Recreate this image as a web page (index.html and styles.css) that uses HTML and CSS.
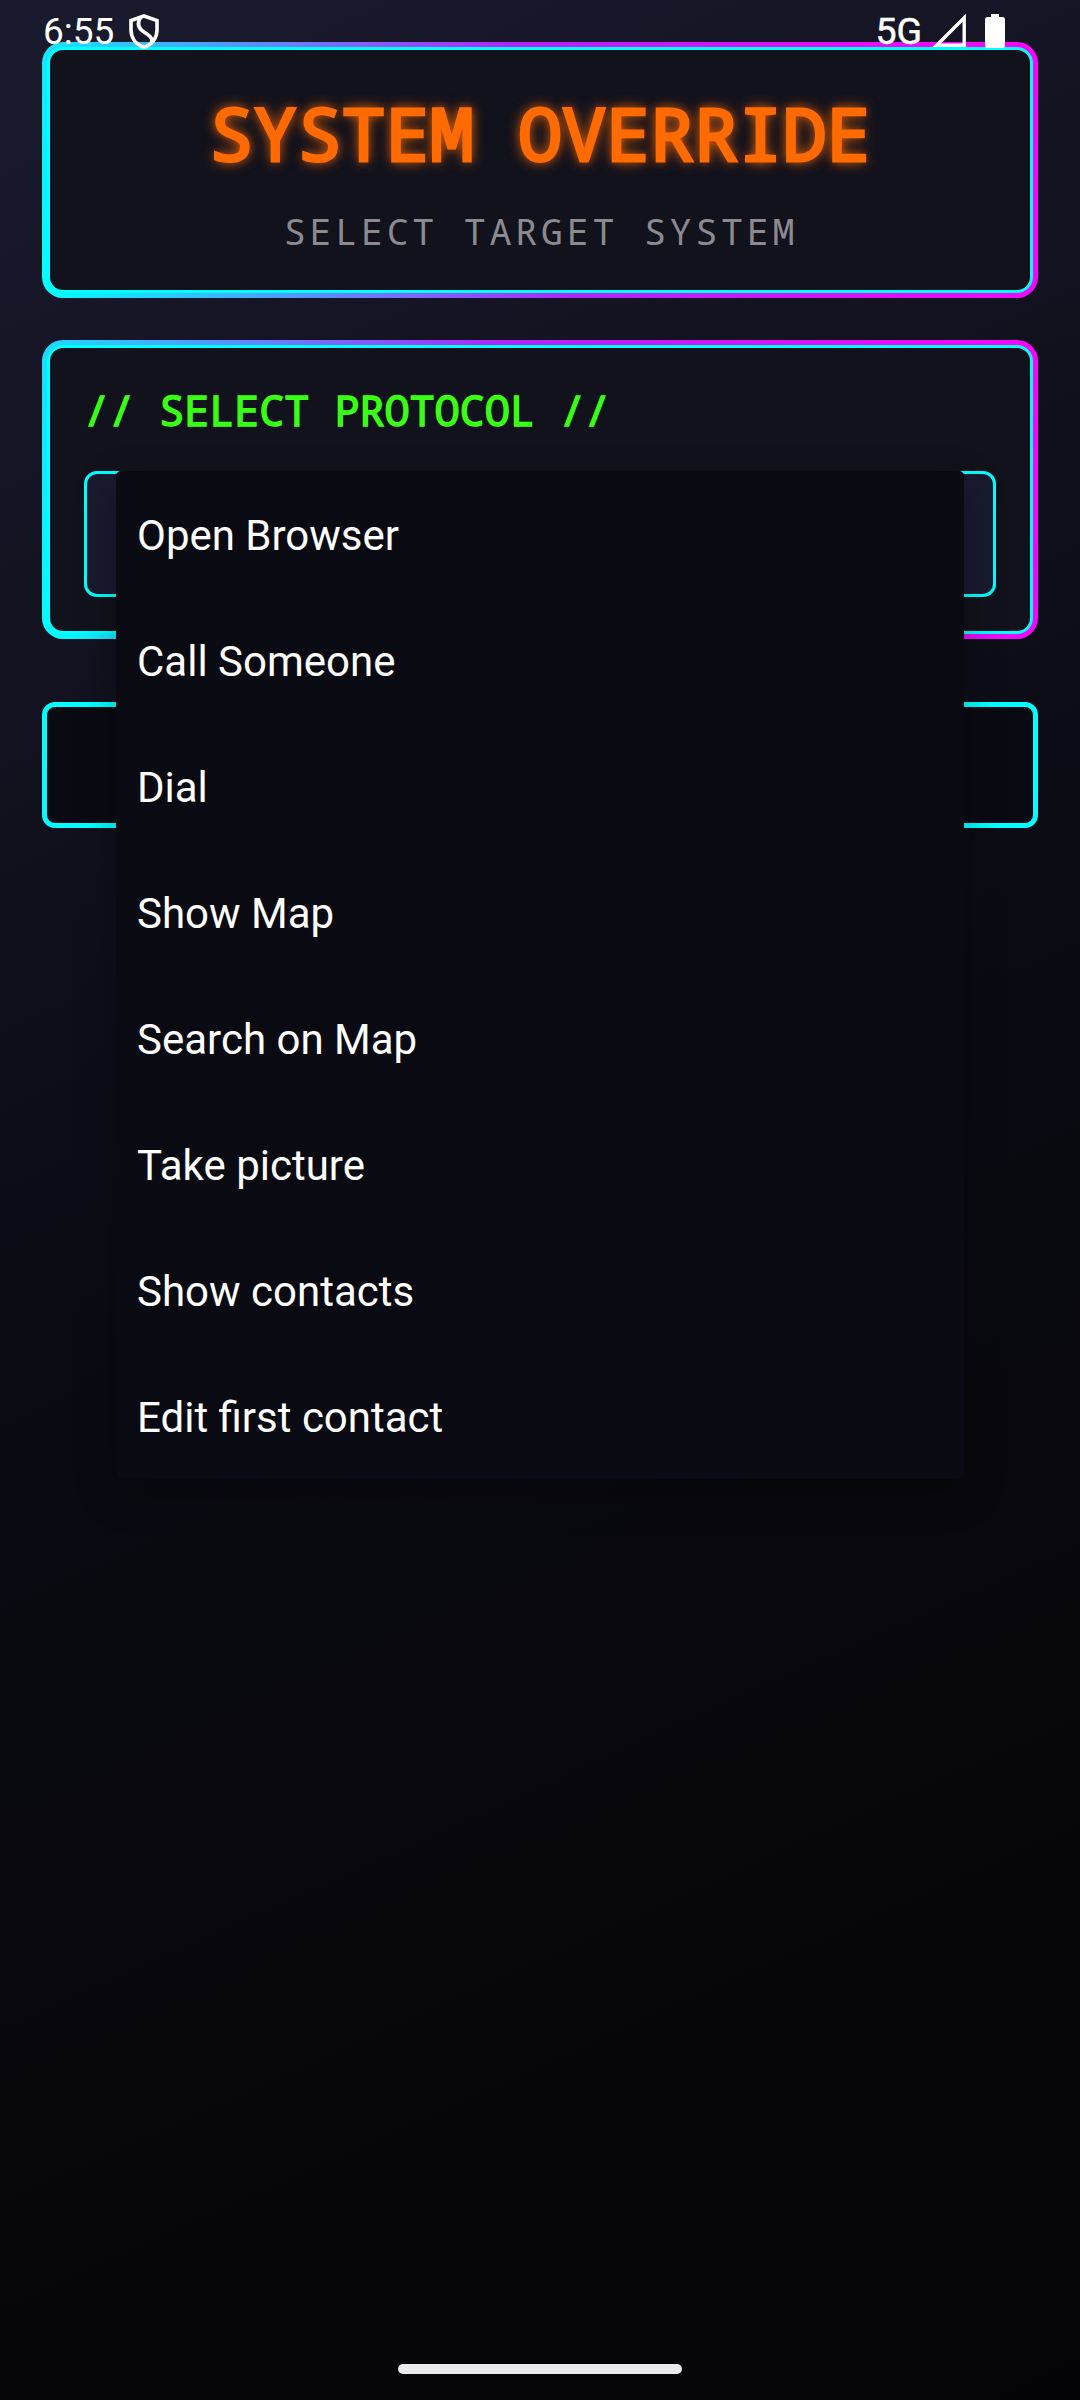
FILE: index.html
```html
<!DOCTYPE html>
<html lang="en">
<head>
<meta charset="utf-8">
<title>System Override</title>
<link rel="stylesheet" href="styles.css">
</head>
<body>
<div class="screen">
  <div class="status">
    <div class="status-left">
      <span class="clock">6:55</span>
      <svg class="shield" viewBox="0 0 30 36" fill="none" stroke="#fff" stroke-width="3.600"><path d="M15 2 28 6.500V16C28 24 23 30.500 15 33.500 7 30.500 2 24 2 16V6.500Z"/><path d="M11.500 3.500C7.500 10 9.500 14.500 15 18S24 24 22.500 28.500"/></svg>
    </div>
    <div class="status-right">
      <span class="network">5G</span>
      <svg class="signal" viewBox="0 0 33 33"><path d="M31.200 3.800V31.200H3.800Z" fill="none" stroke="#fff" stroke-width="3.400"/></svg>
      <svg class="battery" viewBox="0 0 20 34"><path d="M6 0H14V3H18Q20 3 20 5.500V31Q20 34 17.500 34H2.500Q0 34 0 31V5.500Q0 3 2 3H6Z" fill="#fff"/></svg>
    </div>
  </div>
  <header class="card card-title">
    <div class="panel">
      <h1 class="title">SYSTEM OVERRIDE</h1>
      <p class="subtitle">SELECT TARGET SYSTEM</p>
    </div>
  </header>
  <section class="card card-protocol">
    <div class="panel">
      <h2 class="label">// SELECT PROTOCOL //</h2>
      <div class="spinner">
        <ul class="menu">
          <li>Open Browser</li>
          <li>Call Someone</li>
          <li>Dial</li>
          <li>Show Map</li>
          <li>Search on Map</li>
          <li>Take picture</li>
          <li>Show contacts</li>
          <li>Edit first contact</li>
        </ul>
      </div>
    </div>
  </section>
  <div class="execute"></div>
  <div class="home-bar"></div>
</div>
</body>
</html>
```
FILE: styles.css
```css
* { box-sizing: border-box; }
body { margin: 0; }
h1, h2, p, ul { margin: 0; padding: 0; font-weight: 400; }
.screen {
  position: relative;
  display: flex;
  flex-direction: column;
  width: 1080px;
  height: 2400px;
  padding: 42px 42px 26px;
  overflow: hidden;
  color: #fff;
  font-family: Roboto, sans-serif;
  background: linear-gradient(155.8deg, #1a1a2e 0%, #0a0a12 50%, #040406 100%);
}
.status {
  position: absolute;
  z-index: 2;
  top: 10px;
  left: 43px;
  right: 75px;
  display: flex;
  justify-content: space-between;
  font-size: 37px;
  line-height: 44px;
}
.status-left, .status-right { display: flex; }
.network { font-size: 37.5px; line-height: 42px; -webkit-text-stroke: 0.5px #fff; }
.shield { width: 30px; height: 36px; margin: 4px 0 0 15px; }
.signal { width: 33px; height: 33px; margin: 4px 19px 0 11px; }
.battery { width: 20px; height: 34px; margin-top: 4px; }

.card { padding: 5px; border-radius: 21px; }
.panel {
  height: 100%;
  border: 3px solid #0ff;
  border-radius: 16px;
  background: #12121c;
}
.card-title {
  height: 256px;
  background: linear-gradient(75.6deg, #0ff 0%, #b026ff 50%, #f0f 100%);
}
.card-protocol {
  height: 299px;
  margin-top: 42px;
  background: linear-gradient(73.3deg, #0ff 0%, #b026ff 50%, #f0f 100%);
}
.title, .subtitle, .label { font-family: "Droid Sans Mono", "Noto Sans Mono", "DejaVu Sans Mono", monospace; white-space: nowrap; }
.title {
  padding-top: 40px;
  text-align: center;
  font-size: 73.5px;
  line-height: 86px;
  color: #ff6b00;
  -webkit-text-stroke: 3px #ff6b00;
  text-shadow: 0 0 14px #ff6b00, 0 0 8px rgba(255, 107, 0, 0.5);
}
.subtitle {
  padding: 33px 0 0 2px;
  text-align: center;
  font-size: 36.75px;
  line-height: 44px;
  letter-spacing: 3.675px;
  color: #8a8a90;
}
.card-protocol .panel { padding: 34px; }
.label {
  height: 89px;
  padding-top: 3px;
  font-size: 42px;
  line-height: 50px;
  letter-spacing: -0.16px;
  color: #39ff14;
  -webkit-text-stroke: 1.4px #39ff14;
}
.spinner {
  position: relative;
  height: 126px;
  border: 3px solid #0ff;
  border-radius: 13px;
  background: #1a1a2e;
}
.menu {
  position: absolute;
  z-index: 3;
  top: -3px;
  left: 29px;
  width: 848px;
  list-style: none;
  border-radius: 5px;
  background: #0a0a12;
  box-shadow: 0 14px 40px rgba(0, 0, 0, 0.28);
}
.menu li { height: 126px; padding-left: 21px; font-size: 42px; line-height: 130px; }
.execute {
  height: 126px;
  margin-top: 63px;
  border: 5px solid #0ff;
  border-radius: 13px;
  background: #0a0a12;
}
.home-bar { width: 284px; height: 10px; margin: auto auto 0; border-radius: 5px; background: #ebebeb; }
```
